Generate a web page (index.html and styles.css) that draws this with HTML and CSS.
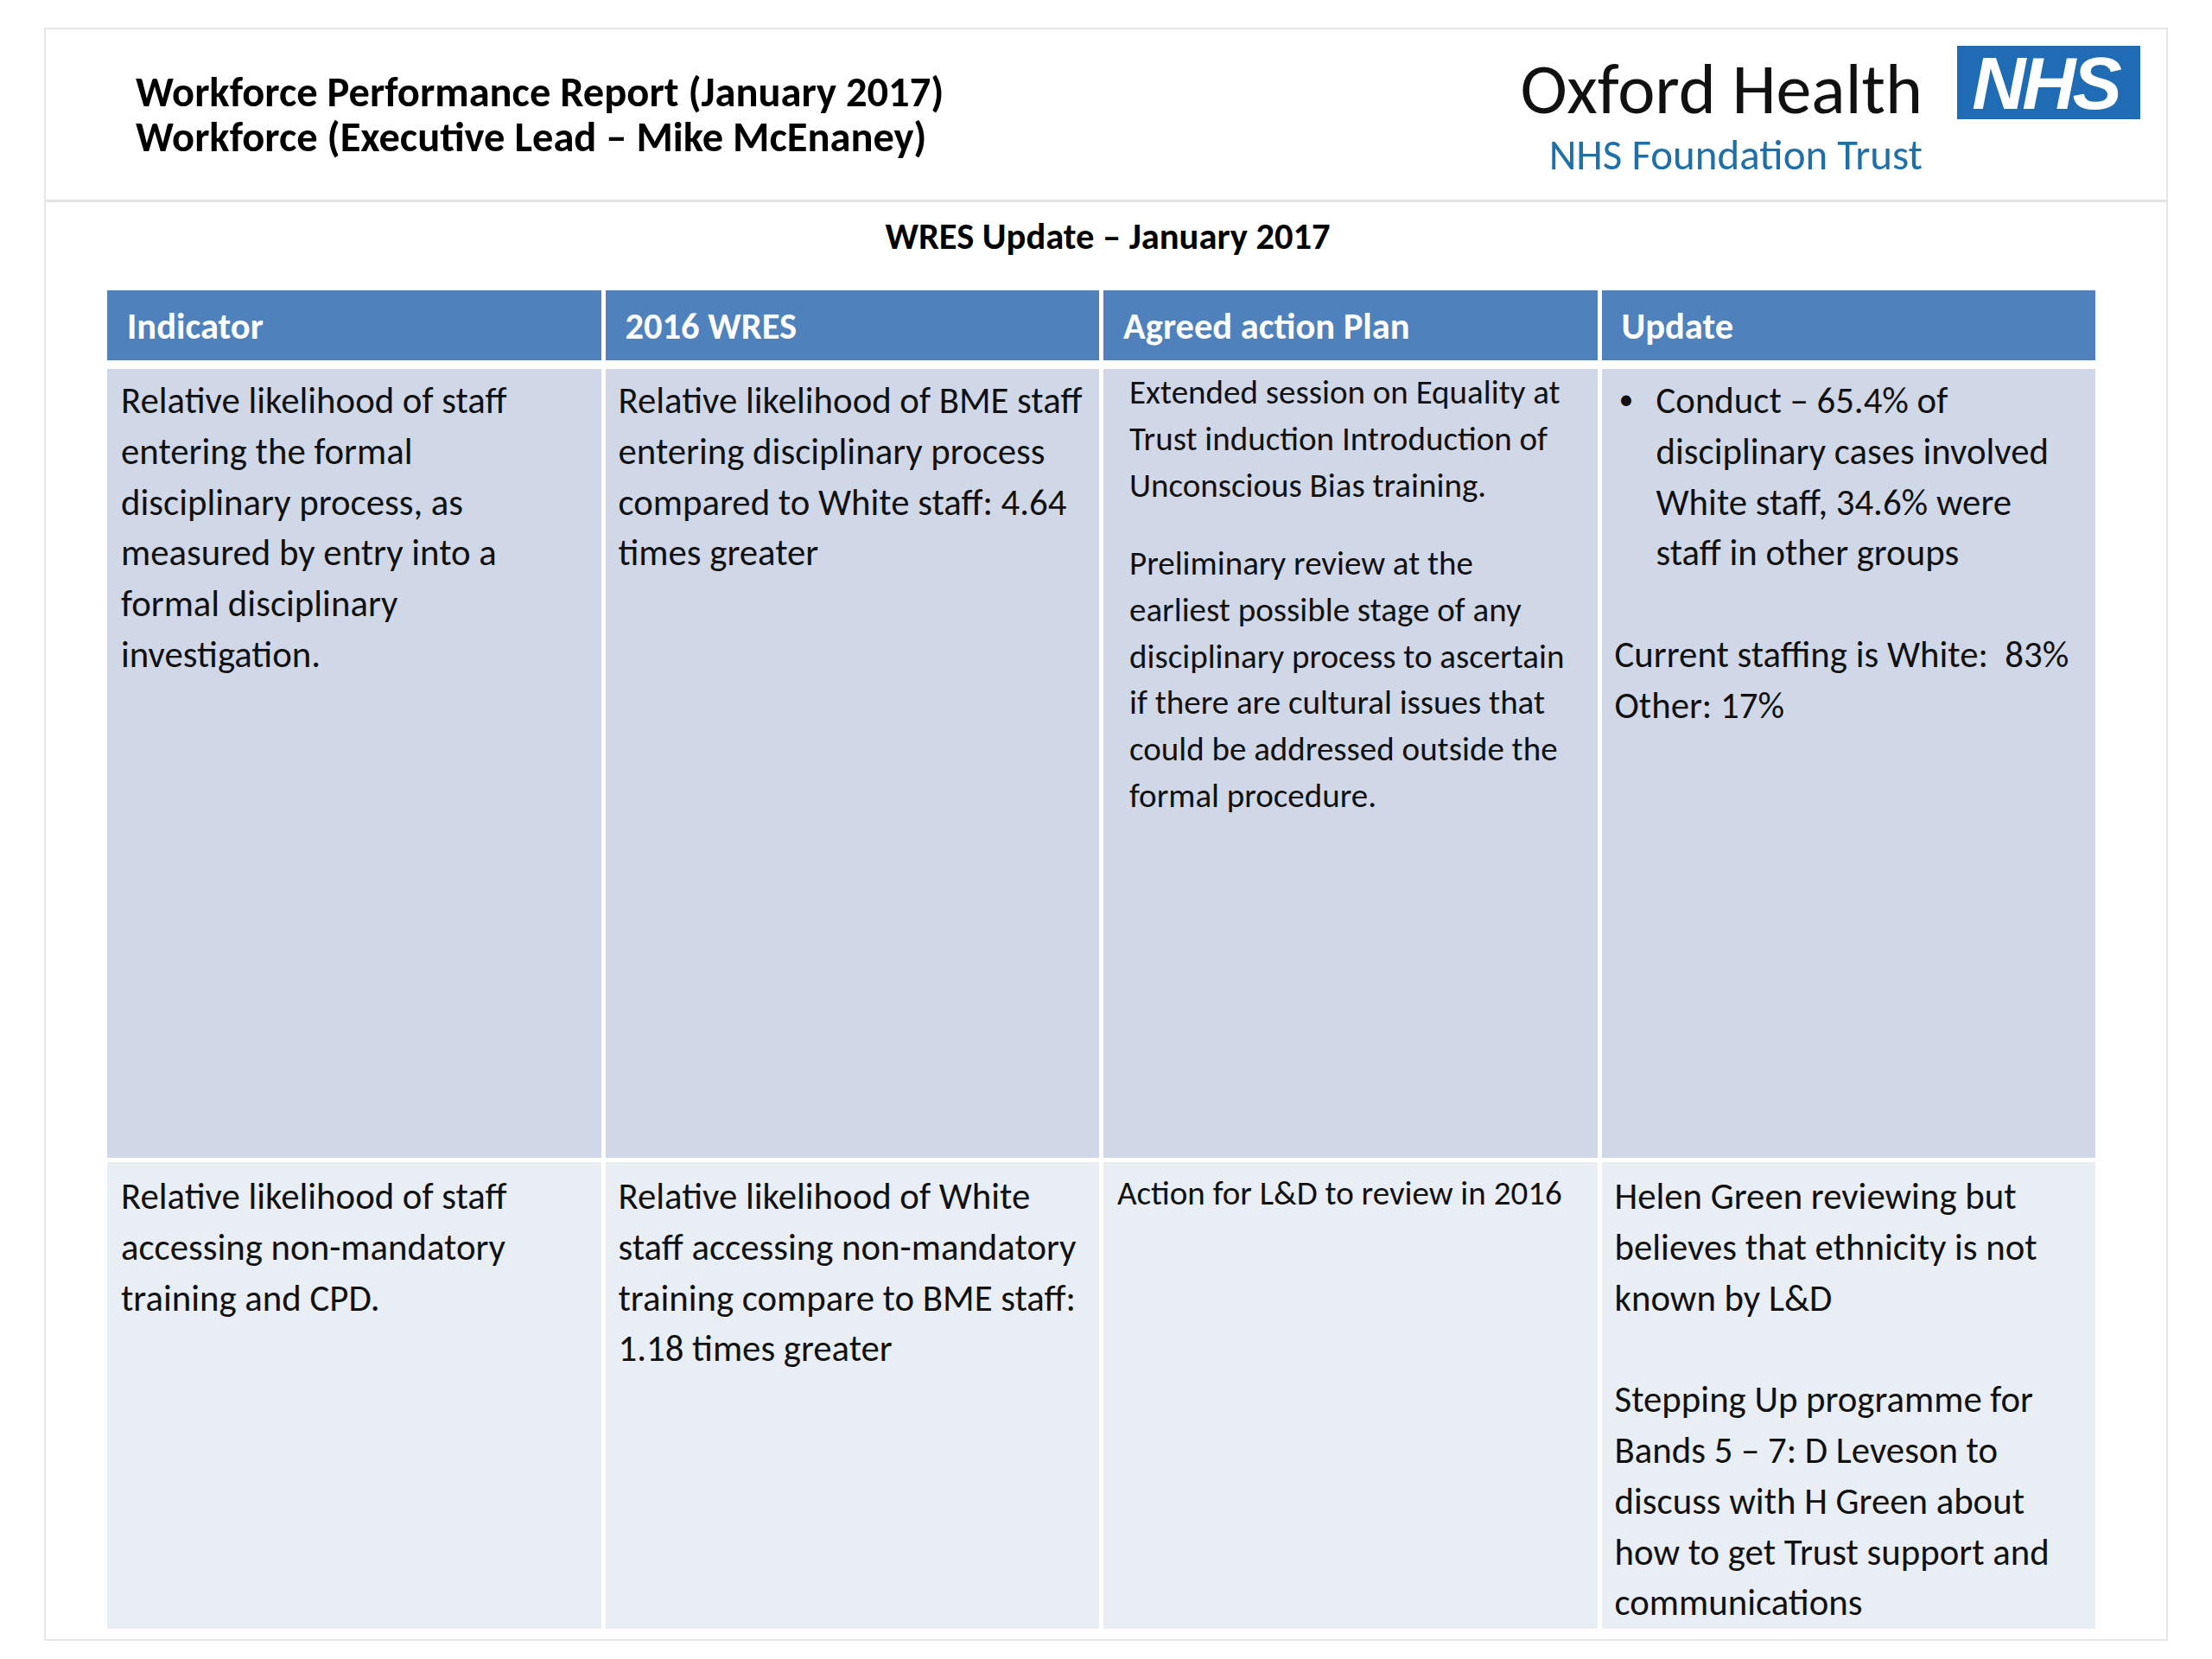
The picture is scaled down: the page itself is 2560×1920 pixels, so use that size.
FILE: index.html
```html
<!DOCTYPE html>
<html lang="en">
<head>
<meta charset="utf-8">
<title>Workforce Performance Report (January 2017)</title>
<link rel="stylesheet" href="styles.css">
</head>
<body>
<div class="slide">
  <header class="head">
    <div class="titles">
      <p class="title-text">Workforce Performance Report (January 2017)<br>Workforce (Executive Lead – Mike McEnaney)</p>
    </div>
    <div class="brand">
      <div class="brand-text">
        <div class="org">Oxford Health</div>
        <div class="trust">NHS Foundation Trust</div>
      </div>
      <div class="nhs-box"><span class="nhs">NHS</span></div>
    </div>
  </header>
  <main class="body">
    <h1 class="sub">WRES Update – January 2017</h1>
    <div class="grid">
      <div class="th">Indicator</div>
      <div class="th">2016 WRES</div>
      <div class="th">Agreed action Plan</div>
      <div class="th">Update</div>

      <div class="td r1 c1"><p>Relative likelihood of staff<br>entering the formal<br>disciplinary process, as<br>measured by entry into a<br>formal disciplinary<br>investigation.</p></div>
      <div class="td r1 c2"><p>Relative likelihood of BME staff<br>entering disciplinary process<br>compared to White staff: 4.64<br>times greater</p></div>
      <div class="td r1 c3 tight">
        <p>Extended session on Equality at<br>Trust induction Introduction of<br>Unconscious Bias training.</p>
        <p class="para">Preliminary review at the<br>earliest possible stage of any<br>disciplinary process to ascertain<br>if there are cultural issues that<br>could be addressed outside the<br>formal procedure.</p>
      </div>
      <div class="td r1 c4">
        <div class="bullet"><span class="dot">•</span><p>Conduct – 65.4% of<br>disciplinary cases involved<br>White staff, 34.6% were<br>staff in other groups</p></div>
        <p class="blank">&nbsp;</p>
        <p>Current staffing is White:&nbsp; 83%<br>Other: 17%</p>
      </div>

      <div class="td r2 c1"><p>Relative likelihood of staff<br>accessing non-mandatory<br>training and CPD.</p></div>
      <div class="td r2 c2"><p>Relative likelihood of White<br>staff accessing non-mandatory<br>training compare to BME staff:<br>1.18 times greater</p></div>
      <div class="td r2 c3 r2c3"><p>Action for L&amp;D to review in 2016</p></div>
      <div class="td r2 c4">
        <p>Helen Green reviewing but<br>believes that ethnicity is not<br>known by L&amp;D</p>
        <p class="blank">&nbsp;</p>
        <p>Stepping Up programme for<br>Bands 5 – 7: D Leveson to<br>discuss with H Green about<br>how to get Trust support and<br>communications</p>
      </div>
    </div>
  </main>
</div>
</body>
</html>
```
FILE: styles.css
```css
* { box-sizing: border-box; }

html, body {
  margin: 0;
  padding: 0;
  background: #ffffff;
}

body {
  font-family: Carlito, Calibri, Lato, "Open Sans", sans-serif;
  color: #111111;
}

.slide {
  margin: 32px 0 0 51px;
  width: 2458px;
  height: 1867px;
  border: 2px solid #e7e7e7;
  background: #ffffff;
}

/* ---------- header ---------- */
.head {
  height: 200px;
  border-bottom: 3px solid #e4e4e4;
  display: flex;
  justify-content: space-between;
  align-items: flex-start;
  padding: 0 30px 0 104px;
}

.titles {
  padding-top: 47px;
}

.title-text {
  margin: 0;
  font-size: 48.5px;
  font-weight: bold;
  line-height: 52px;
  white-space: nowrap;
  color: #000;
}

.brand {
  display: flex;
  align-items: flex-start;
}

.brand-text {
  display: flex;
  flex-direction: column;
  align-items: flex-end;
  padding-top: 23px;
}

.org {
  font-size: 82px;
  line-height: 92px;
  color: #111;
  white-space: nowrap;
}

.trust {
  font-size: 49px;
  line-height: 52px;
  color: #1f6fa8;
  margin-top: 4px;
  white-space: nowrap;
}

.nhs-box {
  margin-left: 40px;
  margin-top: 19px;
  width: 212px;
  height: 85px;
  background: #1f6cb4;
  display: flex;
  align-items: center;
  justify-content: center;
}

.nhs {
  font-family: "Liberation Sans", Arial, sans-serif;
  font-weight: bold;
  font-style: italic;
  font-size: 86px;
  line-height: 1;
  letter-spacing: -4px;
  color: #ffffff;
  padding-right: 8px;
}

/* ---------- body ---------- */
.body {
  padding-top: 16px;
}

.sub {
  margin: 0;
  text-align: center;
  font-size: 42.5px;
  line-height: 48px;
  font-weight: bold;
  color: #000;
  padding-left: 4px;
}

.grid {
  margin: 38px 0 0 71px;
  width: 2301px;
  display: grid;
  grid-template-columns: repeat(4, 1fr);
  grid-template-rows: 86px 913px 540px;
  column-gap: 5px;
  row-gap: 5px;
}

.th {
  background: #4f81bd;
  border-bottom: 5px solid #ffffff;
  color: #ffffff;
  font-weight: bold;
  font-size: 42.5px;
  display: flex;
  align-items: center;
  padding: 2px 0 0 23px;
  white-space: nowrap;
}

.td {
  font-size: 42.8px;
  line-height: 58.8px;
  white-space: nowrap;
  padding: 7px 0 0 16px;
}

.td p {
  margin: 0;
}

.r1 { background: #d0d8e8; }
.r2 { background: #e9edf4; padding-top: 10px; }

.c2 { padding-left: 15px; }

.tight {
  font-size: 39px;
  line-height: 53.9px;
  padding-top: 0;
  padding-left: 30px;
}

.tight .para {
  margin-top: 36px;
}

.r2c3 {
  font-size: 39px;
  padding-top: 7px;
}

.c4 { padding-left: 15px; }

.bullet {
  display: flex;
}

.dot {
  width: 48px;
  flex: none;
  padding-left: 5px;
  font-size: 34px;
}

.blank {
  height: 58.8px;
}
```
